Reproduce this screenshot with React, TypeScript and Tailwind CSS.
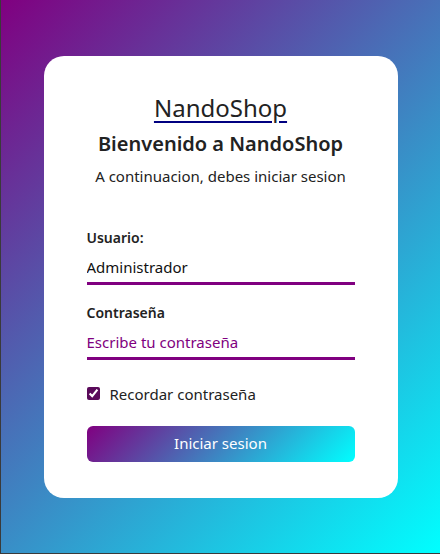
import React from "react";

export default function App() {
  return (
    <div
      className="w-[440px] h-[554px] flex items-center justify-center bg-[linear-gradient(135deg,#800080,#00ffff)] border-l border-b border-[#3a3a3a]"
      style={{ fontFamily: '"Noto Sans", "Open Sans", sans-serif' }}
    >
      <div className="w-[354px] h-[442px] bg-white rounded-[20px] px-[43px] pt-[36px] flex flex-col text-[#222]">
        <h1 className="text-center text-[24px] leading-[32px] underline decoration-[#000080] underline-offset-[4px]">
          NandoShop
        </h1>
        <h2 className="mt-[7px] text-center text-[20px] leading-[26px] font-semibold">
          Bienvenido a NandoShop
        </h2>
        <p className="mt-[7px] text-center text-[15px] leading-[24px]">
          A continuacion, debes iniciar sesion
        </p>
        <label className="mt-[39px] text-[14px] leading-[22px] font-semibold">Usuario:</label>
        <input
          className="mt-[7px] w-full text-[15px] leading-[22px] pb-[4px] border-b-[3px] border-[#800080] outline-none text-[#111]"
          defaultValue="Administrador"
        />
        <label className="mt-[17px] text-[14px] leading-[22px] font-semibold">Contraseña</label>
        <input
          type="password"
          className="mt-[7px] w-full text-[15px] leading-[22px] pb-[4px] border-b-[3px] border-[#800080] outline-none placeholder:text-[#800080]"
          placeholder="Escribe tu contraseña"
        />
        <label className="mt-[24px] flex items-center gap-[10px] text-[15px] leading-[20px]">
          <input type="checkbox" defaultChecked className="w-[13px] h-[13px] accent-[#5a0a5a]" />
          Recordar contraseña
        </label>
        <button className="mt-[22px] h-[36px] w-full rounded-[6px] bg-[linear-gradient(135deg,#800080,#00ffff)] text-white text-[15px]">
          Iniciar sesion
        </button>
      </div>
    </div>
  );
}
